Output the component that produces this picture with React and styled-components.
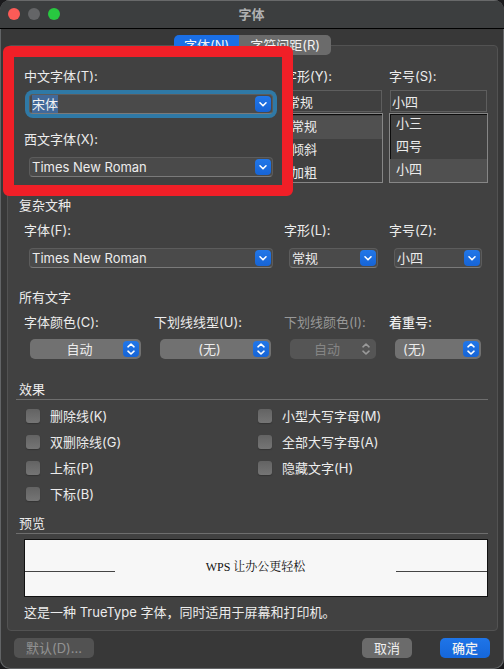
import React, { useEffect, useId, useRef } from "react";
import styled, { createGlobalStyle, css } from "styled-components";

const GlobalStyle = createGlobalStyle`
  *, *::before, *::after { box-sizing: border-box; }
  body {
    margin: 0;
    background: #1b1b1d;
    color: #ececec;
    font: 13px/20px Inter, "Noto Sans CJK SC", sans-serif;
  }
  input, select, button { font: inherit; color: inherit; margin: 0; }
`;

const Window = styled.main`
  display: flex;
  flex-direction: column;
  min-height: 100vh;
  overflow: hidden;
  border-radius: 10px;
  background: #383838;
  box-shadow: inset 0 0 0 1px #626466;
`;

const TitleBar = styled.header`
  display: grid;
  grid-template-columns: 1fr auto 1fr;
  align-items: center;
  height: 29px;
  padding: 0 9px 0 8px;
  background: #3c3e3f;
  border-bottom: 1px solid #000;
  box-shadow: inset 0 1px 0 #68696a;
`;

const Title = styled.h1`
  margin: 0;
  font-size: 13px;
  line-height: 20px;
  font-weight: 700;
  color: #b0b1b2;
`;

const Lights = styled.div`
  display: flex;
  gap: 8px;
`;

const Light = styled.button`
  width: 12px;
  height: 12px;
  padding: 0;
  border: 0;
  border-radius: 50%;
  background: ${(p) => p.$color};
`;

const Content = styled.div`
  flex: 1;
  padding: 6px 6px 0 7px;
`;

const Tabs = styled.div`
  position: relative;
  z-index: 1;
  display: flex;
  width: max-content;
  margin: 0 auto;
  border-radius: 5px;
  overflow: hidden;
`;

const Tab = styled.button`
  height: 20px;
  padding: 0 ${(p) => (p.$active ? 10 : 11)}px;
  border: 0;
  color: #f2f2f2;
  background: ${(p) => (p.$active ? "#1a6fe6" : "#6b6b6b")};
`;

const Panel = styled.section`
  margin-top: -10px;
  padding: 20px 9px 8px 8px;
  border: 1px solid #525252;
  border-radius: 4px;
  background: #414141;
`;

const Columns = styled.div`
  display: grid;
  grid-template-columns: ${(p) => (p.$four ? "130fr 130fr 105fr 99fr" : "260fr 105fr 99fr")};
  margin-left: 8px;
`;

const FieldStack = styled.div`
  position: relative;
  display: flex;
  flex-direction: column;
  gap: 15px;
`;

const Callout = styled.div`
  position: absolute;
  z-index: 2;
  inset: -20px -9px -13px -21px;
  border: 11px solid #f01f27;
  border-radius: 6px;
  pointer-events: none;
`;

const Field = styled.div`
  display: flex;
  flex-direction: column;
  gap: ${(p) => p.$gap || 8}px;
  min-width: 0;
`;

const Label = styled.label`
  color: ${(p) => (p.$dim ? "#989898" : "#ececec")};
  font-weight: ${(p) => (p.$strong ? 500 : 400)};
  white-space: nowrap;
`;

const ComboBox = styled.div`
  display: flex;
  align-items: center;
  height: 20px;
  margin: 0 ${(p) => (p.$last ? 6 : 11)}px 0 5px;
  padding-right: 1px;
  border: 1px solid #5c5c5c;
  border-bottom-color: #7a7a7a;
  border-radius: 4px;
  background: #4a4a4a;
  ${(p) =>
    p.$focused &&
    css`
      box-shadow: 0 0 0 4px #2f79a6;
    `}
`;

const ComboInput = styled.input`
  flex: 1;
  min-width: 0;
  height: 18px;
  padding: 0 2px;
  border: 0;
  outline: 0;
  background: transparent;
  &::selection { background: #41699a; color: #f2f2f2; }
`;

const ComboButton = styled.button`
  display: flex;
  align-items: center;
  justify-content: center;
  width: 16px;
  height: 16px;
  padding: 0;
  border: 0;
  border-radius: 4px;
  background: linear-gradient(#2277e8, #1664d6);
`;

const PlainInput = styled.input`
  height: 22px;
  margin: 0 ${(p) => (p.$last ? 1 : 7)}px 0 1px;
  padding: 0 1px;
  min-width: 0;
  border: 1px solid #5e5e5e;
  outline: 0;
  background: #404040;
`;

const ListGroup = styled.div`
  display: flex;
  flex-direction: column;
  gap: 1px;
`;

const ListBox = styled.select`
  height: 70px;
  margin-right: ${(p) => (p.$last ? 0 : 6)}px;
  padding: 2px 0 0;
  border: 1px solid #868686;
  outline: 0;
  border-radius: 0;
  overflow: hidden;
  scrollbar-width: none;
  background: #404040;
  box-shadow: inset 1px 1px 0 #0c0c0c;

  option {
    height: 23px;
    min-height: 23px;
    padding: 0 6px;
    line-height: 23px;
    color: #ececec;
  }
  option:checked {
    color: #ececec;
    background: linear-gradient(#505050, #505050);
  }
`;

const SectionTitle = styled.h2`
  margin: ${(p) => p.$space}px 0 0 0;
  padding-left: 3px;
  font-size: 13px;
  line-height: 20px;
  font-weight: 400;
  border-bottom: ${(p) => (p.$ruled ? "1px solid #6e6e6e" : "0")};
`;

const SectionBody = styled.div`
  margin-top: 5px;
`;

const PopUp = styled.div`
  position: relative;
  height: 20px;
  margin: 0 ${(p) => (p.$last ? 7 : 13)}px 0 6px;
  border-radius: 5px;
  background: ${(p) => (p.$disabled ? "#555555" : "#717171")};
  color: ${(p) => (p.$disabled ? "#858585" : "#ececec")};
`;

const PopUpSelect = styled.select`
  appearance: none;
  display: block;
  width: 100%;
  height: 20px;
  padding: 0 22px 0 ${(p) => (p.$left ? 8 : 10)}px;
  border: 0;
  outline: 0;
  background: transparent;
  text-align: ${(p) => (p.$left ? "left" : "center")};
  text-align-last: ${(p) => (p.$left ? "left" : "center")};
  opacity: 1;
  &:disabled { color: inherit; opacity: 1; }
`;

const PopUpArrows = styled.span`
  position: absolute;
  top: 2px;
  right: 2px;
  display: flex;
  align-items: center;
  justify-content: center;
  width: 16px;
  height: 16px;
  border-radius: 4px;
  pointer-events: none;
  background: ${(p) => (p.$disabled ? "transparent" : "linear-gradient(#2277e8, #1664d6)")};
`;

const Checks = styled.div`
  display: grid;
  grid-template-columns: 232fr 230fr;
  margin: 3px 0 0 10px;
`;

const CheckRow = styled.label`
  display: flex;
  align-items: center;
  gap: 10px;
  height: 26px;
  grid-column: ${(p) => p.$column};
`;

const CheckBox = styled.input`
  appearance: none;
  width: 14px;
  height: 14px;
  border-radius: 3px;
  background: linear-gradient(#636363, #757575);
  box-shadow: 0 1px 1px #333;
`;

const Preview = styled.div`
  display: grid;
  grid-template-columns: 90fr 281fr 91fr;
  align-items: center;
  height: 58px;
  margin: 5px 0 0 8px;
  border: 1px solid #111;
  background: #f7f7f7;
  color: #111;
  font: 12px/18px "Liberation Serif", "Noto Serif CJK SC", "Noto Sans CJK SC", serif;
  text-align: center;
`;

const PreviewText = styled.span`
  padding-bottom: 2px;
`;

const Rule = styled.span`
  height: 1px;
  margin-top: 6px;
  background: #444;
`;

const Note = styled.p`
  margin: 5px 0 0 8px;
`;

const Footer = styled.footer`
  display: flex;
  align-items: center;
  gap: 28px;
  padding: 7px 14px 11px;
`;

const PushButton = styled.button`
  height: 20px;
  min-width: 50px;
  padding: 0 12px;
  border: 0;
  border-radius: 5px;
  color: #f0f0f0;
  background: #6b6b6b;
  ${(p) =>
    p.$primary &&
    css`
      font-weight: 500;
      background: linear-gradient(#1f75e8, #1566da);
    `}
  &:disabled {
    margin-right: auto;
    color: #929292;
    background: #525252;
  }
`;

function Chevron() {
  return (
    <svg width="10" height="10" viewBox="0 0 10 10" fill="none" stroke="#fff" strokeWidth="1.6" strokeLinecap="round" strokeLinejoin="round" aria-hidden="true">
      <path d="M2 3.8 5 6.8 8 3.8" />
    </svg>
  );
}

function UpDown({ color }) {
  return (
    <svg width="10" height="14" viewBox="0 0 10 14" fill="none" stroke={color} strokeWidth="1.6" strokeLinecap="round" strokeLinejoin="round" aria-hidden="true">
      <path d="M2 4.8 5 2 8 4.8M2 9.2 5 12 8 9.2" />
    </svg>
  );
}

function ComboField({ label, value, last, focused }) {
  const id = useId();
  const input = useRef(null);
  useEffect(() => {
    if (focused) {
      input.current.focus();
      input.current.select();
    }
  }, [focused]);
  return (
    <Field>
      <Label htmlFor={id}>{label}</Label>
      <ComboBox $last={last} $focused={focused}>
        <ComboInput id={id} ref={input} defaultValue={value} />
        <ComboButton type="button" aria-label={label}>
          <Chevron />
        </ComboButton>
      </ComboBox>
    </Field>
  );
}

function ListField({ label, value, options, last }) {
  const id = useId();
  const list = useRef(null);
  useEffect(() => {
    if (options.indexOf(value) === options.length - 1) {
      list.current.scrollTop = list.current.scrollHeight;
    }
  }, [options, value]);
  return (
    <Field $gap={4}>
      <Label htmlFor={id}>{label}</Label>
      <ListGroup>
        <PlainInput id={id} defaultValue={value} $last={last} />
        <ListBox ref={list} size={3} defaultValue={value} aria-label={label} $last={last}>
          {options.map((o) => (
            <option key={o}>{o}</option>
          ))}
        </ListBox>
      </ListGroup>
    </Field>
  );
}

function PopUpField({ label, value, last, disabled, strong }) {
  const id = useId();
  return (
    <Field $gap={7}>
      <Label htmlFor={id} $dim={disabled} $strong={strong}>{label}</Label>
      <PopUp $last={last} $disabled={disabled}>
        <PopUpSelect id={id} disabled={disabled} $left={last}>
          <option>{value}</option>
        </PopUpSelect>
        <PopUpArrows $disabled={disabled}>
          <UpDown color={disabled ? "#9a9a9a" : "#fff"} />
        </PopUpArrows>
      </PopUp>
    </Field>
  );
}

const STYLES = ["常规", "倾斜", "加粗"];
const SIZES = ["小三", "四号", "小四"];

const EFFECTS = [
  ["删除线(K)", 1],
  ["小型大写字母(M)", 2],
  ["双删除线(G)", 1],
  ["全部大写字母(A)", 2],
  ["上标(P)", 1],
  ["隐藏文字(H)", 2],
  ["下标(B)", 1],
];

export default function App() {
  return (
    <>
      <GlobalStyle />
      <Window>
        <TitleBar>
          <Lights>
            <Light type="button" aria-label="关闭" $color="#fc5b57" />
            <Light type="button" aria-label="最小化" $color="#646567" />
            <Light type="button" aria-label="缩放" $color="#28c840" />
          </Lights>
          <Title>字体</Title>
        </TitleBar>
        <Content>
          <Tabs role="tablist">
            <Tab type="button" role="tab" aria-selected="true" $active>字体(N)</Tab>
            <Tab type="button" role="tab" aria-selected="false">字符间距(R)</Tab>
          </Tabs>
          <Panel>
            <Columns>
              <FieldStack>
                <ComboField label="中文字体(T):" value="宋体" focused />
                <ComboField label="西文字体(X):" value="Times New Roman" />
                <Callout />
              </FieldStack>
              <ListField label="字形(Y):" value="常规" options={STYLES} />
              <ListField label="字号(S):" value="小四" options={SIZES} last />
            </Columns>

            <SectionTitle $space={12}>复杂文种</SectionTitle>
            <SectionBody>
              <Columns>
                <ComboField label="字体(F):" value="Times New Roman" />
                <ComboField label="字形(L):" value="常规" />
                <ComboField label="字号(Z):" value="小四" last />
              </Columns>
            </SectionBody>

            <SectionTitle $space={19}>所有文字</SectionTitle>
            <SectionBody>
              <Columns $four>
                <PopUpField label="字体颜色(C):" value="自动" />
                <PopUpField label="下划线线型(U):" value="(无)" />
                <PopUpField label="下划线颜色(I):" value="自动" disabled />
                <PopUpField label="着重号:" value="(无)" last strong />
              </Columns>
            </SectionBody>

            <SectionTitle $space={20} $ruled>效果</SectionTitle>
            <Checks>
              {EFFECTS.map(([text, column]) => (
                <CheckRow key={text} $column={column}>
                  <CheckBox type="checkbox" />
                  {text}
                </CheckRow>
              ))}
            </Checks>

            <SectionTitle $space={6} $ruled>预览</SectionTitle>
            <Preview>
              <Rule />
              <PreviewText>WPS 让办公更轻松</PreviewText>
              <Rule />
            </Preview>
            <Note>这是一种 TrueType 字体，同时适用于屏幕和打印机。</Note>
          </Panel>
        </Content>
        <Footer>
          <PushButton type="button" disabled>默认(D)...</PushButton>
          <PushButton type="button">取消</PushButton>
          <PushButton type="button" $primary>确定</PushButton>
        </Footer>
      </Window>
    </>
  );
}
